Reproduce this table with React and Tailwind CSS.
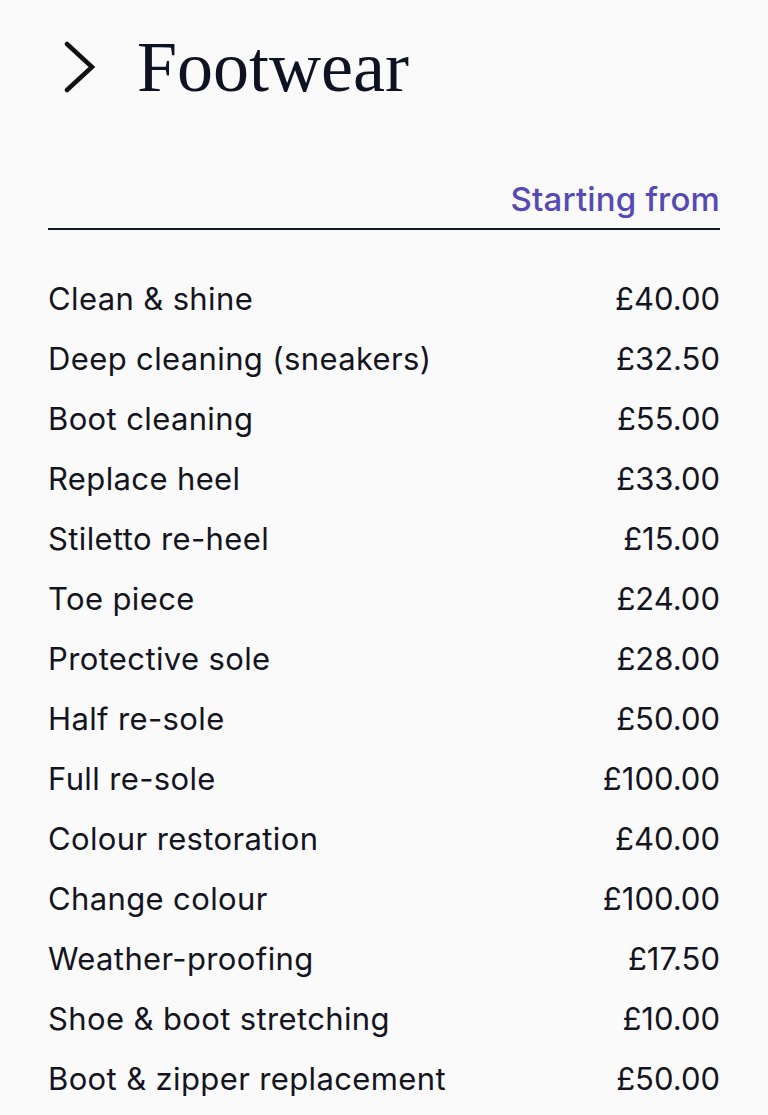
const services = [
  ["Clean & shine", "£40.00"],
  ["Deep cleaning (sneakers)", "£32.50"],
  ["Boot cleaning", "£55.00"],
  ["Replace heel", "£33.00"],
  ["Stiletto re-heel", "£15.00"],
  ["Toe piece", "£24.00"],
  ["Protective sole", "£28.00"],
  ["Half re-sole", "£50.00"],
  ["Full re-sole", "£100.00"],
  ["Colour restoration", "£40.00"],
  ["Change colour", "£100.00"],
  ["Weather-proofing", "£17.50"],
  ["Shoe & boot stretching", "£10.00"],
  ["Boot & zipper replacement", "£50.00"],
];

export default function App() {
  return (
    <div className="min-h-[1115px] bg-[#fafafb] px-12 pt-[24px] text-[#14141f] font-['Inter',sans-serif]">
      {/* heading */}
      <div className="flex items-center gap-[40px] pl-[15px]">
        <svg width="34" height="52" viewBox="0 0 34 52" fill="none" className="shrink-0">
          <polyline points="4,3 29,26 4,49" stroke="#111" strokeWidth="4.5" strokeLinecap="round" strokeLinejoin="miter" />
        </svg>
        <h1 className="font-['Liberation_Serif',serif] text-[72px] leading-[86px] text-[#0e1222]">
          Footwear
        </h1>
      </div>

      {/* table header */}
      <div className="mt-[70px] flex justify-end border-b-2 border-[#111827] pb-[10px]">
        <span className="text-[33px] leading-[38px] font-medium tracking-[0.005em] text-[#5549b5]">Starting from</span>
      </div>

      {/* rows */}
      <ul className="mt-[39px] flex flex-col">
        {services.map(([name, price]) => (
          <li key={name} className="flex items-center justify-between h-[60px] text-[31px] leading-[36px]">
            <span className="tracking-[0.012em]">{name}</span>
            <span>{price}</span>
          </li>
        ))}
      </ul>
    </div>
  );
}
